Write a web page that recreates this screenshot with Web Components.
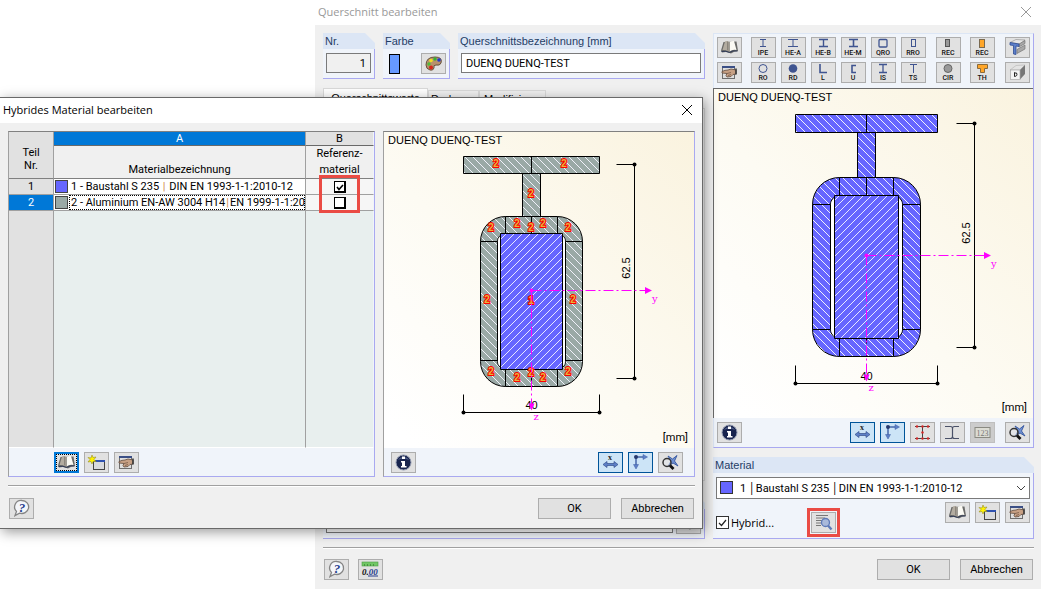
<!DOCTYPE html>
<html lang="de">
<head>
<meta charset="utf-8">
<title>Querschnitt bearbeiten</title>
<style>
  html, body { height: 100%; }
  body { margin: 0; background: #fff; color: #000; font: 11px/13px Roboto, "Liberation Sans", sans-serif; }
</style>
</head>
<body>
<section-desktop></section-desktop>

<script>
const define = (name, html, setup) => {
  const template = document.createElement('template');
  template.innerHTML = html;
  customElements.define(name, class extends HTMLElement {
    connectedCallback() {
      if (this.shadowRoot) return;
      this.attachShadow({ mode: 'open' }).append(template.content.cloneNode(true));
      if (setup) setup(this, this.shadowRoot);
    }
  });
};

/* ---------- icons, drawn on a 23 x 19 grid ---------- */
const B = '#3f5490';
const lab = t => `<text x="11" y="17" text-anchor="middle" font-family="Roboto, sans-serif" font-weight="500" font-size="7" fill="#111">${t}</text>`;
const line = (d, w = 1, c = B) => `<path d="${d}" fill="none" stroke="${c}" stroke-width="${w}"/>`;
const ICONS = {
  ipe: line('M8 1.500h6M8 8.500h6M11 2v6') + lab('IPE'),
  hea: line('M6 1.500h10M6 8.500h10M11 2v6') + lab('HE-A'),
  heb: line('M7 1.500h9M7 8.500h9M11.500 2v6', 1.4) + lab('HE-B'),
  hem: line('M7 1.500h9M7 8.500h9M11.500 2v6', 1.6) + lab('HE-M'),
  qro: `<rect x="7" y="1.500" width="8" height="7.500" rx="1" fill="none" stroke="${B}" stroke-width="1.300"/>` + lab('QRO'),
  rro: `<rect x="9.500" y="1.500" width="4" height="7" fill="none" stroke="${B}"/>` + lab('RRO'),
  recg: '<rect x="8.500" y="1.500" width="4" height="7" fill="#999" stroke="#555"/>' + lab('REC'),
  reco: '<rect x="8.500" y="1.500" width="5" height="8" fill="#ffa629" stroke="#7a6a50"/>' + lab('REC'),
  ro: `<circle cx="11" cy="5.500" r="4" fill="none" stroke="${B}"/>` + lab('RO'),
  rd: `<circle cx="11" cy="5.500" r="4.300" fill="${B}"/>` + lab('RD'),
  l: line('M8 1v8.500h7', 1.6) + lab('L'),
  u: line('M14 2.500h-4v7h4', 1.6) + lab('U'),
  is: line('M7 1.500h8M7 9.500h8M11 2v7', 1.3) + lab('IS'),
  ts: line('M8 1.500h7M11.500 2v8') + lab('TS'),
  cir: '<circle cx="11" cy="5.500" r="4" fill="#999" stroke="#666"/>' + lab('CIR'),
  th: '<path d="M6.500 1.500h10v4h-3v4h-4v-4h-3z" fill="#ffa629" stroke="#8a6a3a"/>' + lab('TH'),
  book: '<path d="M3 12.500 5.500 4l13-.5 1.500 9.500q-4 0-7 2.500-4-2.500-9-1z" fill="#6a6a68"/><path d="M4.500 12 7 3.500q2.500-1 4 .5v9.500q-3-2-6.500-1.500z" fill="#b3aca0"/><path d="M11.500 4Q14 2.500 16 3l2.500 9q-4-1-7 1.500z" fill="#fbfaf4"/><path d="M9.500 3.500v9M11 4v9.500" stroke="#8a857c"/><path d="M3.500 13.500q4.500-1 8 1 3.500-2.500 8-1.500" fill="none" stroke="#2f3a58"/>',
  hand: '<rect x="4.500" y="3.500" width="12" height="12" fill="#dedede" stroke="#6e6e6e"/><path d="M4 4h13" stroke="#3b4f86" stroke-width="2"/><path d="M4 8.500q3-1.500 6-1.500l3-1 5 1v4l-3 .5-2 2-4 .5-1-1.500 1-2-5-.5z" fill="#c7a084" stroke="#5f4a3c" stroke-width=".8"/><path d="m9 10.500 4-1M10 12.500l3-1" stroke="#6d5241" stroke-width=".7"/><path d="M18 5.500v6" stroke="#3a3a3a" stroke-width="1.600"/>',
  neu: '<rect x="8.500" y="7.500" width="11" height="9" fill="#d8dade" stroke="#444"/><path d="M8 8h12" stroke="#2f52b0" stroke-width="2"/><path d="m7 2 1 2.500L11 4 9 6.500l2 2L8 8.500 7 11 6 8.500 3 9l2-2.500-2-2 3 .5z" fill="#fff200" stroke="#98921e" stroke-width=".6"/>',
  help: '<path d="M12 1.500a6.800 6.500 0 1 1-2.500 12.600L5 16.500l1.500-4A6.500 6.500 0 0 1 12 1.500z" fill="#f4f6fa" stroke="#858585" stroke-width="1.300"/><text x="12" y="12.500" text-anchor="middle" font-family="Liberation Serif, serif" font-style="italic" font-weight="700" font-size="13" fill="#263c8d">?</text>',
  num: '<rect x="3" y="2" width="16" height="4" fill="#71c765" stroke="#4b9d44" stroke-width=".6"/><path d="M5.500 4v2M8.500 4v2M11.500 4v2M14.500 4v2" stroke="#3a8035" stroke-width=".7"/><text x="3" y="14.500" font-family="Liberation Serif, serif" font-style="italic" font-weight="700" font-size="9" fill="#111">0.<tspan fill="#263c8d">00</tspan></text><path d="M9 16h10" stroke="#263c8d"/>',
  info: '<circle cx="11.500" cy="9.500" r="7.500" fill="#18244e" stroke="#939bb0"/><path d="M6 7a6 5 0 0 1 11 0q-6-3-11 0z" fill="#7180ad" opacity=".6"/><path d="M10 3.500h3v2.500h-3zM9 8h4v5h1.500v1.500H9V13h1V9.500H9z" fill="#fff"/>',
  xdim: '<text x="11" y="7" text-anchor="middle" font-family="Liberation Serif, serif" font-weight="700" font-size="8" fill="#222">x</text><path d="m4 11.500 4-3v2h7v-2l4 3-4 3v-2H8v2z" fill="#5d80c7" stroke="#344f8d" stroke-width=".7"/>',
  axes: '<path d="M7 5v9M7 4h9" fill="none" stroke="#4465a9" stroke-width="1.500"/><path d="m14 1.500 4.500 2.500-4.500 2.500zM4.500 11.500 7 16l2.500-4.500z" fill="#5d80c7" stroke="#3e5da4" stroke-width=".5"/><circle cx="7" cy="4" r="2" fill="#26396d"/>',
  idots: line('M4 3.500h15M4 15.500h15M11.500 4v12', 1, '#444') + '<g fill="#d22727"><circle cx="6" cy="3.500" r="1.200"/><circle cx="11.500" cy="3.500" r="1.200"/><circle cx="17" cy="3.500" r="1.200"/><circle cx="11.500" cy="9.500" r="1.200"/><circle cx="6" cy="15.500" r="1.200"/><circle cx="11.500" cy="15.500" r="1.200"/><circle cx="17" cy="15.500" r="1.200"/></g>',
  ibeam: line('M4 3.500h5.500q2 0 2 2v8q0 2-2 2H4M18 3.500h-4.500q-2 0-2 2M11.500 13.500q0 2 2 2H18', 1.2, '#4a5168'),
  n123: '<rect x="4" y="4.500" width="15" height="10" fill="#dcdcd4" stroke="#8a8a82"/><text x="11.500" y="12.500" text-anchor="middle" font-family="Liberation Serif, serif" font-size="8" fill="#777">123</text>',
  lensx: '<path d="m9 3 4.500 3L18 2.500 15.500 8l3.500 5-5-3-5 3.500L12 8z" fill="#6f90d2" stroke="#34569f" stroke-width=".9"/><circle cx="8" cy="9.500" r="4" fill="#e4e8ee" fill-opacity=".5" stroke="#333" stroke-width="1.500"/><path d="m11 12.500 3.500 3.500" stroke="#111" stroke-width="2.800"/>',
  lenslist: '<path d="M4 2.500h12M4 5h9M4 7.500h6M4 10h5M4 12.500h5" stroke="#777"/><circle cx="13.500" cy="9.500" r="4" fill="#a9b9da" stroke="#5e7ab8" stroke-width="1.300"/><path d="m16 12.500 3.500 4" stroke="#5e7ab8" stroke-width="2.400"/>',
  palette: '<path d="M4 11Q4 3 13 3q8 0 6 6-1 3-5 2-3 0-2 3-1 3-4 2-4-1-4-5z" fill="#b8916a" stroke="#66513c"/><circle cx="9" cy="6.500" r="1.800" fill="#f0de22"/><circle cx="13" cy="5" r="1.700" fill="#32b336"/><circle cx="17" cy="6" r="1.800" fill="#203bce"/><circle cx="7" cy="10" r="1.700" fill="#4ebb3a"/><circle cx="9" cy="13.500" r="2" fill="#d72619"/>',
  profil: '<path d="m4 4.500 6-3 9 .5-5 4z" fill="#e6e6e6" stroke="#8a8a8a" stroke-width=".6"/><path d="m13 6 6-3.500v3L13 9zM11 11.500l8-4.500v4l-8 4.500z" fill="#a8a8a8" stroke="#6b6b6b" stroke-width=".6"/><path d="M4 4.500 13 6v2.500l-3-.5v8.500l-2.500-.5V7.500L4 7z" fill="#5c7fca" stroke="#2f4d93" stroke-width=".8"/>',
  kasten: '<path d="m4 7 6-4.500 9-.5-5 5z" fill="#e3e3e3" stroke="#aaa" stroke-width=".5"/><path d="m14 7 5-5v9l-5 5.500z" fill="#767676"/><rect x="4.500" y="7" width="9.500" height="9.500" fill="#f4f4f4" stroke="#aaa" stroke-width=".7"/><path d="M8.500 9.500v4q3.500-.5 2-3.500H8" fill="none" stroke="#222"/>'
};

/* ---------- tool button: state is empty, on, off or focus ---------- */
define('tool-button', `
  <style>
    :host { display: block; width: 25px; height: 21px; flex: none; }
    button { display: block; width: 100%; height: 100%; box-sizing: border-box; padding: 0; border: 1px solid #adadad; background: #e1e1e1; }
    svg { display: block; width: 23px; height: 19px; }
    :host([state=on]) button { background: #cce4f7; border-color: #005499; }
    :host([state=off]) button { background: #ccc; border-color: #bfbfbf; }
    :host([state=focus]) button { border: 2px solid #0078d7; outline: 1px dotted #000; outline-offset: -3px; }
    :host([state=focus]) svg { margin: -1px; }
  </style>
  <button type="button"><svg viewBox="0 0 23 19" aria-hidden="true"></svg></button>`,
  (host, root) => {
    root.querySelector('svg').innerHTML = ICONS[host.getAttribute('icon')];
    root.querySelector('button').setAttribute('aria-label', host.getAttribute('label') || host.getAttribute('icon'));
    root.querySelector('button').disabled = host.getAttribute('state') === 'off';
  });

define('push-button', `
  <style>
    :host { display: block; width: 73px; height: 21px; }
    button { display: block; width: 100%; height: 100%; padding: 0; border: 1px solid #adadad; background: #e1e1e1; color: #000; font: inherit; }
  </style>
  <button type="button"><slot></slot></button>`);

define('group-box', `
  <style>
    :host { display: flex; flex-direction: column; box-sizing: border-box; background: linear-gradient(#a9a9f0, #a9a9f0) right bottom / 1px calc(100% - 10px) no-repeat; border-bottom: 1px solid #a9a9f0; padding-right: 1px; }
    header { height: 16px; padding-left: 2px; margin-right: -1px; background: #dce6f5; color: #1f3d66; font: 11px/16px "Liberation Sans", sans-serif; white-space: nowrap; clip-path: polygon(0 0, calc(100% - 10px) 0, 100% 10px, 100% 100%, 0 100%); }
    div { flex: 1; background: #f0f4fa; }
  </style>
  <header><slot name="title"></slot></header><div><slot></slot></div>`);

define('rule-line', `<style>:host { display: block; height: 1px; background: #a0a0a0; border-bottom: 1px solid #fff; }</style>`);

/* ---------- window frame ---------- */
define('app-window', `
  <style>
    :host { display: flex; flex-direction: column; background: #f0f0f0; box-sizing: border-box; }
    header { display: flex; align-items: center; justify-content: space-between; height: 23px; padding: 0 9px 2px 3px; background: #fff; color: var(--bar-ink, #999); font: 11px/16px "Open Sans", sans-serif; }
    button { border: 0; padding: 0; background: none; color: inherit; }
    svg { display: block; width: 12px; height: 12px; }
    main { flex: 1; display: flex; flex-direction: column; padding: 8px 7px 9px 8px; }
  </style>
  <header><span></span><button type="button" aria-label="Schließen"><svg viewBox="0 0 12 12"><path d="m1 1 10 10M11 1 1 11" stroke="currentColor" fill="none"/></svg></button></header>
  <main><slot></slot></main>`,
  (host, root) => { root.querySelector('span').textContent = host.getAttribute('caption'); });

/* ---------- cross-section drawing with dimensions ---------- */
const DRAWINGS = {
  hybrid: { w: 310, h: 316, wall: '#9aa9a6', fx: [79.5, 215.5], fy: [24.5, 41.5], web: [138.5, 156.5], bx: [96.5, 198.5], by: [84.5, 254.5],
    wx: [113.5, 181.5], cx: [121.5, 173.5], cy: [109.5, 228.5], kx: [116.5, 178.5], ky: [101.5, 237.5], dx: 250.5, dy: [32.5, 246.5], ty: 136, db: 280.5, o: [147.5, 158.5], ax: 267,
    marks: [[112, 32], [180, 32], [147, 62], [133, 92], [147, 96], [159, 92], [107, 96], [184, 96], [103, 168], [189, 168], [107, 240], [133, 246], [147, 241], [159, 246], [184, 240], [147, 169, 1]] },
  plain: { w: 319, h: 329, wall: '#6666ff', fx: [81.5, 223.5], fy: [25.5, 43.5], web: [143.5, 161.5], bx: [98.5, 206.5], by: [88.5, 267.5],
    wx: [116.5, 188.5], cx: [125.5, 179.5], cy: [115.5, 240.5], kx: [120.5, 184.5], ky: [106.5, 249.5], dx: 260.5, dy: [34.5, 258.5], ty: 144, db: 294.5, o: [152.5, 166.5], ax: 276, marks: [] }
};
define('section-drawing', `
  <style>
    :host { display: block; background: linear-gradient(45deg, #fff 5%, #fdfbf3 45%, #faf3df); }
    svg { display: block; width: 100%; height: auto; }
    text { font: 11px "Liberation Sans", sans-serif; }
    .ax { font: 10px "DejaVu Serif", serif; fill: #f0f; }
    .mk { font: 700 10px "Liberation Sans", sans-serif; fill: #e6b43a; stroke: #f00; stroke-width: 2px; paint-order: stroke; }
    .un { font-family: Roboto, sans-serif; }
  </style><svg role="img" aria-label="Querschnitt"></svg>`,
  (host, root) => {
    const g = DRAWINGS[host.getAttribute('kind')];
    const [f1, f2] = g.fx, [t1, t2] = g.fy, [w1, w2] = g.web, [b1, b2] = g.bx, [y1, y2] = g.by,
      [i1, i2] = g.wx, [c1, c2] = g.cx, [m1, m2] = g.cy, [k1, k2] = g.kx, [n1, n2] = g.ky, [ox, oy] = g.o;
    const R = c1 - b1, RY = m1 - y1, r = c1 - i1, ry = m1 - n1;
    const box = (x1, ya, x2, yb, rx, rr) => `M${x1} ${ya + rr}A${rx} ${rr} 0 0 1 ${x1 + rx} ${ya}H${x2 - rx}A${rx} ${rr} 0 0 1 ${x2} ${ya + rr}V${yb - rr}A${rx} ${rr} 0 0 1 ${x2 - rx} ${yb}H${x1 + rx}A${rx} ${rr} 0 0 1 ${x1} ${yb - rr}Z`;
    const outline = `M${f1} ${t1}H${f2}V${t2}H${f1}ZM${w1} ${t2}H${w2}V${y1}H${w1}Z` + box(b1, y1, b2, y2, R, RY) + box(i1, n1, i2, n2, r, ry);
    const seams = `M${ox} ${t1}V${t2}M${ox} ${y1}V${n1}M${c1} ${y1}V${n1}M${c2} ${y1}V${n1}M${c1} ${n2}V${y2}M${c2} ${n2}V${y2}M${b1} ${m1}H${i1}M${i2} ${m1}H${b2}M${b1} ${m2}H${i1}M${i2} ${m2}H${b2}`;
    const svg = root.querySelector('svg');
    svg.setAttribute('viewBox', `0 0 ${g.w} ${g.h}`);
    svg.innerHTML = `
      <defs>
        <pattern id="wall" width="8" height="8" patternUnits="userSpaceOnUse"><rect width="8" height="8" fill="${g.wall}"/><path d="M-1-1 9 9M-1 7l2 2M7-1l2 2" stroke="#f0f1fa"/></pattern>
        <pattern id="core" width="8" height="8" patternUnits="userSpaceOnUse"><rect width="8" height="8" fill="#6666ff"/><path d="M-1 9 9-1M-1 1l2-2M7 9l2-2" stroke="#e8e8ff"/></pattern>
      </defs>
      <path d="${outline}" fill="url(#wall)" fill-rule="evenodd" stroke="#000"/>
      <path d="${box(i1 + .5, n1 + .5, i2 - .5, n2 - .5, r, ry)}" fill="#fff"/>
      <path d="${seams}" stroke="#000" fill="none"/>
      <path d="M${k1} ${n1}H${k2}V${n2}H${k1}Z" fill="url(#core)" stroke="#000"/>
      <path d="M${ox} ${n2}V${y2}" stroke="#000" stroke-dasharray="5 3"/>
      <path d="M${g.dx - 18} ${g.dy[0]}H${g.dx}V${g.dy[1]}H${g.dx - 18}M${f1} ${g.db - 18}V${g.db}H${f2}V${g.db - 18}" fill="none" stroke="#000"/>
      <circle cx="${g.dx}" cy="${g.dy[0]}" r="2"/><circle cx="${g.dx}" cy="${g.dy[1]}" r="2"/><circle cx="${f1}" cy="${g.db}" r="2"/><circle cx="${f2}" cy="${g.db}" r="2"/>
      <text x="${ox}" y="${g.db - 4}" text-anchor="middle">40</text>
      <text transform="translate(${g.dx - 5} ${g.ty}) rotate(-90)" text-anchor="middle">62.5</text>
      ${g.marks.map(([x, y, t = 2]) => `<text class="mk" x="${x}" y="${y + 3}" text-anchor="middle">${t}</text>`).join('')}
      <path d="M${ox} ${oy}H${g.ax - 6}M${ox} ${oy}V${g.db - 8}" fill="none" stroke="#f0f" stroke-dasharray="10 3 2 3"/>
      <circle cx="${ox}" cy="${oy}" r="2" fill="#f0f"/>
      <path d="M${g.ax - 6} ${oy - 3.5}l7 3.500-7 3.500zM${ox - 3} ${g.db - 9}h6l-3 7z" fill="#f0f"/>
      <text class="ax" x="${g.ax + 1}" y="${oy + 11}">y</text><text class="ax" x="${ox + 2}" y="${g.db + 7}">z</text>
      <text x="4" y="12">DUENQ DUENQ-TEST</text><text class="un" x="${g.w - 6}" y="${g.h - 7}" text-anchor="end">[mm]</text>`;
  });

/* ---------- hybrid material table ---------- */
define('material-table', `
  <style>
    :host { display: flex; flex-direction: column; position: relative; }
    table { width: 100%; flex: 1; border-collapse: separate; border-spacing: 0; table-layout: fixed; background: #fff; }
    th, td { padding: 0; border: 0 solid #a0a0a0; border-right-width: 1px; border-bottom-width: 1px; font: 11px/15px Roboto, sans-serif; height: 15px; white-space: nowrap; box-sizing: border-box; }
    tr > :last-child { border-right-color: #f0f4fa; }
    thead th { background: #f0f0f0; }
    thead .abc th { background: #e1e1e1; height: 14px; line-height: 13px; border-bottom-color: #696969; }
    thead .abc .sel { background: #0078d7; color: #fff; }
    thead .abc .nr { line-height: 13px; padding-top: 8px; border-bottom-color: #808080; }
    thead .cap th { height: 33px; vertical-align: bottom; line-height: 16px; border-bottom-color: #808080; }
    tbody th { background: #e1e1e1; height: 16px; }
    tbody td { height: 16px; }
    tbody .sel { background: #0078d7; color: #fff; }
    td.a div { display: flex; align-items: center; height: 15px; }
    td.b { background: #f6f6f6; text-align: center; }
    td.a i { flex: none; width: 11px; height: 11px; margin: 0 1px; border: 1px solid #444; background: var(--c); }
    td.a span { flex: 1; padding-left: 2px; height: 15px; }
    td.a .focus { outline: 1px dotted #000; outline-offset: -1px; }
    em { color: #d08a4a; font-style: normal; margin: 0 1px; }
    .rest th { height: auto; }
    .rest td { background: #e8efee; height: auto; }
    .rest > * { border-bottom-color: #fff; }
    input { appearance: none; display: block; width: 12px; height: 12px; margin: 2px auto 1px; box-sizing: border-box; border: 1px solid #000; border-right-width: 2px; border-bottom-width: 2px; background: #fff; }
    label { display: block; position: relative; }
    svg { position: absolute; left: 50%; top: 2px; margin-left: -4px; width: 8px; height: 8px; pointer-events: none; }
    .marker { position: absolute; left: 310px; top: 43px; width: 35px; height: 32px; border: 3px solid #ea4b44; pointer-events: none; }
  </style>
  <table>
    <colgroup><col style="width:45px"><col><col style="width:68px"></colgroup>
    <thead>
      <tr class="abc"><th class="nr" rowspan="2">Teil<br>Nr.</th><th class="sel">A</th><th>B</th></tr>
      <tr class="cap"><th>Materialbezeichnung</th><th>Referenz-<br>material</th></tr>
    </thead>
    <tbody>
      <tr><th>1</th><td class="a"><div><i style="--c:#6666ff"></i><span>1 - Baustahl S 235 <em>|</em> DIN EN 1993-1-1:2010-12</span></div></td>
        <td class="b"><label><input type="checkbox" checked aria-label="Referenzmaterial 1"><svg viewBox="0 0 8 8"><path d="m1 4 2 2.500L7 2" fill="none" stroke="#000" stroke-width="1.600"/></svg></label></td></tr>
      <tr><th class="sel">2</th><td class="a"><div><i style="--c:#9aa9a6"></i><span class="focus">2 - Aluminium EN-AW 3004 H14<em>|</em>EN 1999-1-1:20</span></div></td>
        <td class="b"><input type="checkbox" aria-label="Referenzmaterial 2"></td></tr>
      <tr class="rest"><th></th><td></td><td></td></tr>
    </tbody>
  </table>
  <div class="marker"></div>`);

/* ---------- material drop-down ---------- */
define('material-select', `
  <style>
    :host { display: block; position: relative; }
    select { appearance: none; display: block; width: 100%; height: 22px; padding: 0 20px 0 23px; border: 1px solid #7a7a7a; border-radius: 0; background: #fff; color: #000; font: inherit; white-space: pre; }
    i { position: absolute; left: 4px; top: 4px; width: 11px; height: 11px; border: 1px solid #333; background: #6666ff; }
    svg { position: absolute; right: 4px; top: 8px; width: 10px; height: 6px; pointer-events: none; }
  </style>
  <select aria-label="Material"><option>1 │Baustahl S 235 │DIN EN 1993-1-1:2010-12</option></select><i></i>
  <svg viewBox="0 0 10 6"><path d="m1 1 4 4 4-4" fill="none" stroke="#444"/></svg>`);

/* ---------- "Querschnitt bearbeiten" ---------- */
define('section-editor', `
  <style>
    :host { display: flex; flex-direction: column; flex: 1; }
    .cols { display: grid; grid-template-columns: minmax(0, 1fr) 321px; column-gap: 8px; }
    .left { display: flex; flex-direction: column; }
    .top { display: grid; grid-template-columns: 52px 67px minmax(0, 1fr); column-gap: 8px; height: 46px; }
    .row { display: flex; justify-content: space-between; align-items: center; padding: 4px 3px 4px 6px; }
    .row i { width: 9px; height: 18px; border: 1px solid #000; background: #6699ff; }
    input[type=text] { display: block; box-sizing: border-box; width: calc(100% - 6px); height: 20px; margin: 4px 3px 5px; padding: 0 4px; border: 1px solid #7a7a7a; background: #fff; color: #000; font: 11px Roboto, sans-serif; }
    input.no { background: #f0f0f0; text-align: right; }
    .tabs { display: flex; align-items: flex-end; margin-top: 9px; height: 20px; }
    .tabs button { height: 18px; padding: 0 2px; border: 1px solid #d9d9d9; border-bottom: 0; background: #f0f0f0; color: #000; font: 11px/13px "Liberation Sans", sans-serif; text-align: left; }
    .tabs .on { width: 105px; height: 20px; background: #fff; text-align: center; }
    .tabs .two { width: 51px; } .tabs .three { width: 67px; padding-left: 4px; }
    .page { flex: 1; border: 1px solid #d9d9d9; background: #f9f9f9; margin-bottom: 12px; }
    .foot { display: flex; align-items: center; padding-right: 3px; }
    .foot input { flex: 1; }
    .panel { display: flex; flex-direction: column; border: 1px solid #a9a9f0; border-top-color: #dce6f5; border-left-color: #dce6f5; background: #f0f4fa; box-sizing: border-box; }
    .lib { display: grid; grid-template-columns: 34px repeat(5, 30px) 35px 34px 35px 25px; align-content: start; row-gap: 4px; padding: 3px 3px 5px; }
    section-drawing { border-top: 1px solid #696969; border-left: 1px solid #696969; margin-left: -1px; }
    .bar { display: flex; gap: 5px; padding: 4px 3px; }
    .bar :first-child { margin-right: auto; } .bar :last-child { margin-left: 5px; }
    .mat { margin-top: 9px; }
    material-select { margin: 4px 3px 3px; }
    .opts { display: flex; padding: 0 3px 4px; height: 32px; }
    .opts label { display: flex; align-items: center; gap: 2px; margin-top: 11px; height: 19px; width: 91px; }
    .opts label input { appearance: none; width: 13px; height: 13px; box-sizing: border-box; margin: 0; border: 1px solid #333; background: #fff; }
    .opts label span { font: 11px/13px "Open Sans", sans-serif; }
    .tick { position: relative; display: flex; } .tick svg { position: absolute; left: 2px; top: 3px; width: 9px; height: 8px; }
    .mark { border: 3px solid #ea4b44; padding: 1px; height: 21px; margin-top: 6px; }
    .trio { display: flex; gap: 5px; margin-left: auto; }
    rule-line { margin-top: 8px; }
    .end { display: flex; gap: 10px; margin-top: 10px; padding: 0 1px; }
    .pair { display: flex; gap: 9px; margin-right: auto; }
  </style>
  <div class="cols">
    <div class="left">
      <div class="top">
        <group-box><span slot="title">Nr.</span><input class="no" type="text" value="1" aria-label="Nr."></group-box>
        <group-box><span slot="title">Farbe</span><div class="row"><i></i><tool-button icon="palette" label="Farbe"></tool-button></div></group-box>
        <group-box><span slot="title">Querschnittsbezeichnung [mm]</span><input type="text" value="DUENQ DUENQ-TEST" aria-label="Querschnittsbezeichnung"></group-box>
      </div>
      <div class="tabs"><button class="on">Querschnittswerte</button><button class="two">Drehung</button><button class="three">Modifizieren</button></div>
      <div class="page"></div>
      <group-box><div class="foot"><input type="text" aria-label="Kommentar"><tool-button icon="book" label="Kommentare"></tool-button></div></group-box>
    </div>
    <div>
      <div class="panel">
        <div class="lib"></div>
        <section-drawing kind="plain"></section-drawing>
        <div class="bar">
          <tool-button icon="info" label="Info"></tool-button><tool-button icon="xdim" state="on" label="Maße"></tool-button><tool-button icon="axes" state="on" label="Achsen"></tool-button><tool-button icon="idots" label="Spannungspunkte"></tool-button><tool-button icon="ibeam" label="Profil"></tool-button><tool-button icon="n123" state="off" label="Nummern"></tool-button><tool-button icon="lensx" label="Zoom"></tool-button>
        </div>
      </div>
      <group-box class="mat"><span slot="title">Material</span>
        <material-select></material-select>
        <div class="opts">
          <label><span class="tick"><input type="checkbox" checked><svg viewBox="0 0 9 8"><path d="m1 4 2.500 2.500L8 1" fill="none" stroke="#222" stroke-width="1.200"/></svg></span><span>Hybrid...</span></label>
          <div class="mark"><tool-button icon="lenslist" label="Hybrides Material bearbeiten"></tool-button></div>
          <div class="trio"><tool-button icon="book" label="Bibliothek"></tool-button><tool-button icon="neu" label="Neu"></tool-button><tool-button icon="hand" label="Bearbeiten"></tool-button></div>
        </div>
      </group-box>
    </div>
  </div>
  <rule-line></rule-line>
  <div class="end"><div class="pair"><tool-button icon="help" label="Hilfe"></tool-button><tool-button icon="num" label="Einheiten"></tool-button></div><push-button>OK</push-button><push-button>Abbrechen</push-button></div>`,
  (host, root) => {
    root.querySelector('.lib').innerHTML = 'book ipe hea heb hem qro rro recg reco profil hand ro rd l u is ts cir th kasten'
      .split(' ').map(n => `<tool-button icon="${n}"></tool-button>`).join('');
  });

/* ---------- "Hybrides Material bearbeiten" ---------- */
define('hybrid-editor', `
  <style>
    :host { display: flex; flex-direction: column; }
    .cols { display: grid; grid-template-columns: 367px minmax(0, 1fr); column-gap: 8px; }
    .panel { display: flex; flex-direction: column; box-sizing: border-box; border: 1px solid #a9a9f0; border-top-color: #808080; border-left-color: #a0a0a0; background: #f0f4fa; }
    material-table { flex: 1; }
    .bar { display: flex; gap: 5px; padding: 4px 11px 3px 7px; }
    .list .bar { padding-left: 45px; }
    .view .bar :first-child { margin-right: auto; }
    rule-line { margin-top: 8px; }
    .end { display: flex; gap: 10px; margin-top: 11px; padding: 0 1px; }
    .end > :first-child { margin-right: auto; }
  </style>
  <div class="cols">
    <div class="panel list"><material-table></material-table>
      <div class="bar"><tool-button icon="book" state="focus" label="Bibliothek"></tool-button><tool-button icon="neu" label="Neu"></tool-button><tool-button icon="hand" label="Bearbeiten"></tool-button></div></div>
    <div class="panel view"><section-drawing kind="hybrid"></section-drawing>
      <div class="bar"><tool-button icon="info" label="Info"></tool-button><tool-button icon="xdim" state="on" label="Maße"></tool-button><tool-button icon="axes" state="on" label="Achsen"></tool-button><tool-button icon="lensx" label="Zoom"></tool-button></div></div>
  </div>
  <rule-line></rule-line>
  <div class="end"><tool-button icon="help" label="Hilfe"></tool-button><push-button>OK</push-button><push-button>Abbrechen</push-button></div>`);

define('section-desktop', `
  <style>
    :host { display: block; position: relative; min-height: 100%; overflow: hidden; }
    .main { margin-left: 315px; min-height: 100vh; }
    .dlg { position: absolute; left: 0; right: 338px; top: 97px; border: 1px solid #696969; border-left: 0; box-shadow: 2px 3px 12px rgba(0, 0, 0, .4); --bar-ink: #000; }
  </style>
  <app-window class="main" caption="Querschnitt bearbeiten"><section-editor></section-editor></app-window>
  <app-window class="dlg" caption="Hybrides Material bearbeiten"><hybrid-editor></hybrid-editor></app-window>`);
</script>
</body>
</html>
